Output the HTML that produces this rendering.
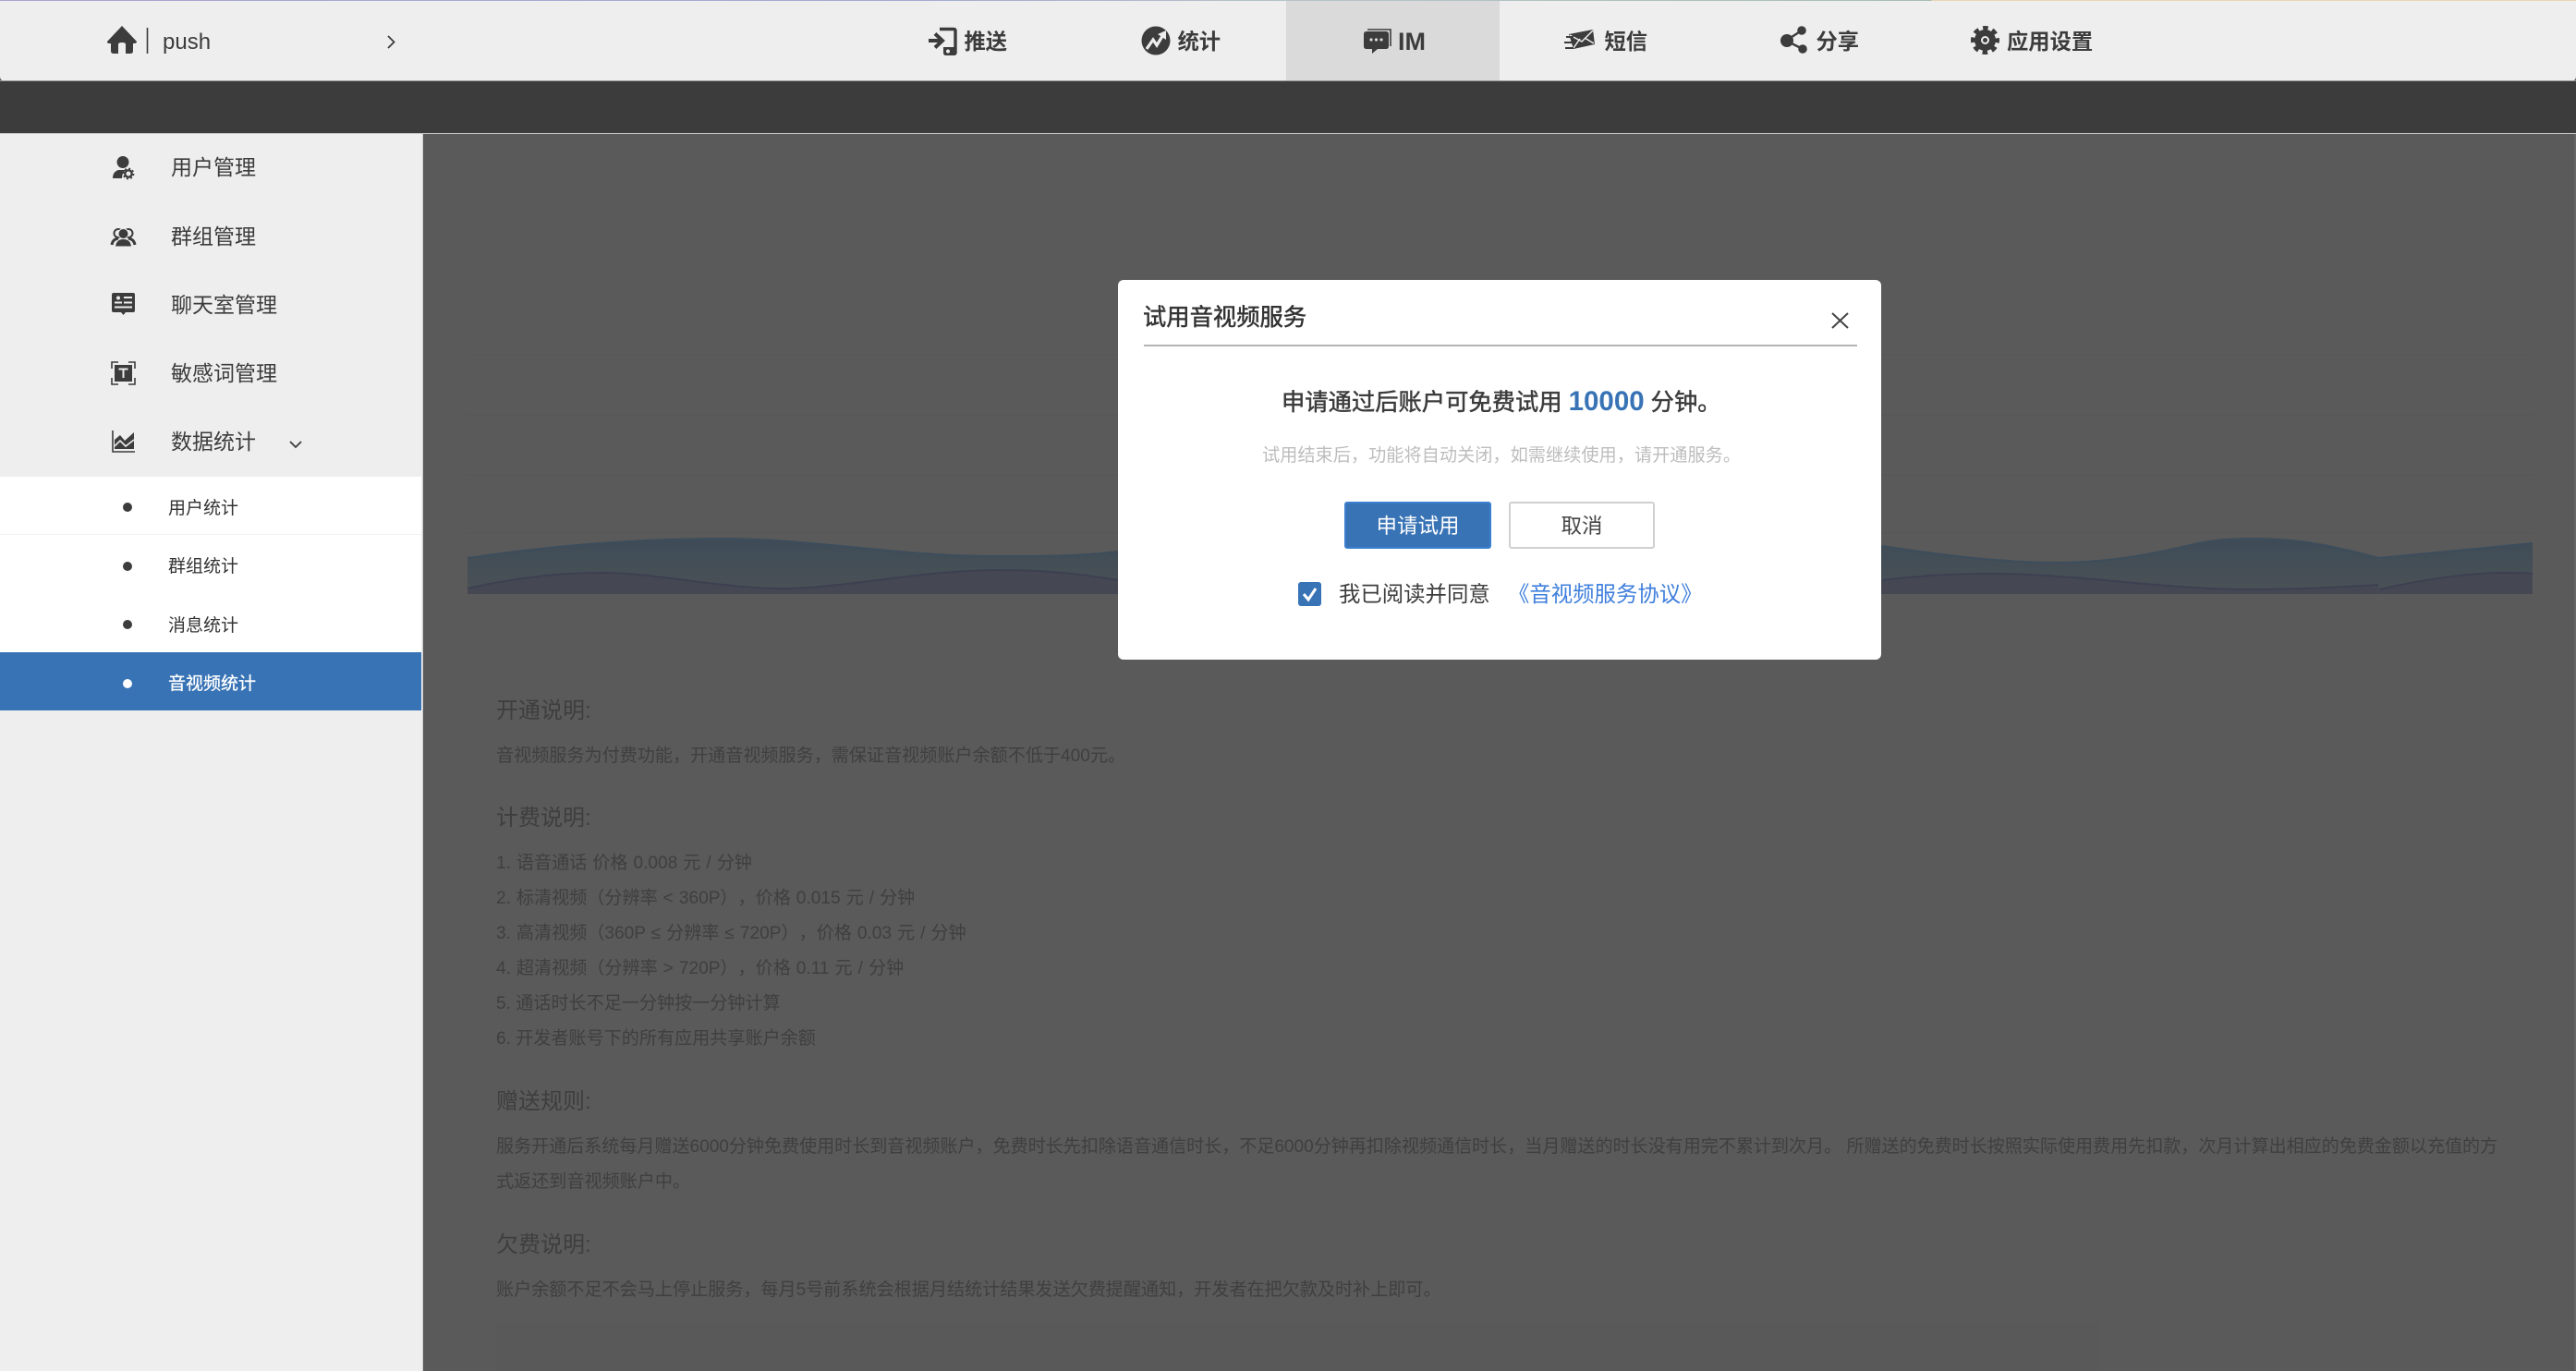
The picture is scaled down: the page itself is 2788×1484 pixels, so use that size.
<!DOCTYPE html>
<html lang="zh-CN"><head><meta charset="utf-8"><title>音视频统计</title>
<style>
html,body{margin:0;padding:0;background:#5a5a5a}
#p{position:relative;width:2788px;height:1484px;overflow:hidden;background:#5a5a5a;font-family:"Liberation Sans","Noto Sans CJK SC",sans-serif;color:#3c3c3c;text-spacing-trim:space-all}
.b{position:absolute}
.t{position:absolute;white-space:nowrap;height:40px;line-height:40px;margin-top:-20px}
.n{font-size:23.300px;font-weight:700;color:#3c3c3c}
.s{font-size:23px;left:185px;color:#3c3c3c}
.u{font-size:19px;left:182px;color:#333}
.h{font-size:24px;left:537px;color:#3e3e3e}
.c{font-size:19.100px;left:537px;color:#3f3f3f}
.l{word-spacing:.7px}
.m{-webkit-text-stroke:.5px currentColor}
svg{position:absolute;left:0;top:0}
</style></head><body><div id="p">
<div class="b" style="left:0;top:0;width:2788px;height:88px;background:#eee;border-radius:0 0 5px 5px"></div>
<div class="b" style="left:0;top:0;width:2788px;height:1px;background:linear-gradient(90deg,#a9a5cd 0,#a3acd0 1000px,#b5c4c8 1400px,#a9bdb5 2090px,#e8d3b5 2091px,#e8d3b5 100%)"></div>
<div class="b" style="left:1392px;top:1px;width:231px;height:86px;background:#dadada"></div>
<div class="b" style="left:0;top:87px;width:2788px;height:1px;background:#9a9a9a"></div>
<div class="b" style="left:0;top:88px;width:2788px;height:56px;background:#3c3c3c"></div>
<div class="b" style="left:0;top:144px;width:2788px;height:1px;background:#c4c4c4"></div>
<div class="b" style="left:0;top:145px;width:457px;height:1339px;background:#eee;border-right:1px solid #cfcfcf"></div>
<div class="b" style="left:0;top:516px;width:456px;height:190px;background:#fff"></div>
<div class="b" style="left:0;top:578px;width:456px;height:1px;background:#f1f1f1"></div>
<div class="b" style="left:0;top:706px;width:456px;height:63px;background:#3873b5"></div>
<div class="b" style="left:2786px;top:145px;width:2px;height:1339px;background:#666"></div>
<div class="b" style="left:537px;top:1431px;width:1735px;height:53px;background:#595959"></div>

<svg width="2788" height="1484" viewBox="0 0 2788 1484">
<defs><linearGradient id="g" x1="0" y1="583" x2="0" y2="643" gradientUnits="userSpaceOnUse"><stop offset="0" stop-color="#3e4c57"/><stop offset="1" stop-color="#4b5156"/></linearGradient></defs>
<g stroke="#565656" stroke-width="1"><path d="M506 384H2741M506 449H2741M506 514H2741M506 577H2741"/></g>
<path d="M506 604C600 590 690 583 780 583C880 583 970 602 1076 602C1130 602 1170 602 1210 597L2037 591C2110 602 2170 609 2226 609C2290 609 2340 597 2370 590C2400 583 2420 583 2442 583C2490 583 2530 592 2574 604V643H506Z" fill="url(#g)"/>
<path d="M2574 604L2741 588V643H2574Z" fill="url(#g)"/>
<path d="M506 604C600 590 690 583 780 583C880 583 970 602 1076 602C1130 602 1170 602 1210 597M2037 591C2110 602 2170 609 2226 609C2290 609 2340 597 2370 590C2400 583 2420 583 2442 583C2490 583 2530 592 2574 604L2741 588" fill="none" stroke="#3d4d5b" stroke-width="2"/>
<path d="M506 637C560 625 610 620 650 620C710 620 780 637 848 637C910 637 1000 617 1081 617C1130 617 1170 621 1210 628L2037 628C2070 624 2110 621 2151 621C2250 621 2340 638 2432 638C2490 638 2530 636 2574 633V643H506Z" fill="#454853"/>
<path d="M2575 638C2620 628 2670 620 2713 620C2725 620 2735 620 2741 621V643H2575Z" fill="#454853"/>
<path d="M506 637C560 625 610 620 650 620C710 620 780 637 848 637C910 637 1000 617 1081 617C1130 617 1170 621 1210 628M2037 628C2070 624 2110 621 2151 621C2250 621 2340 638 2432 638C2490 638 2530 636 2574 633M2575 638C2620 628 2670 620 2713 620C2725 620 2735 620 2741 621" fill="none" stroke="#3c4051" stroke-width="2"/>

<!-- home -->
<path d="M132 28L148 45Q148 47 145 47H144V55Q144 58 141 58H136V48Q136 46 132 46Q128 46 128 48V58H123Q120 58 120 55V47H118Q116 47 116 45Z" fill="#3c3c3c"/>
<path d="M159.500 30V58" stroke="#3c3c3c" stroke-width="1.600"/>
<path d="M420 39L426.500 45.500L420 52" fill="none" stroke="#3c3c3c" stroke-width="1.800"/>
<!-- push -->
<path d="M1017 31.500H1032Q1034 31.500 1034 33.500V58" fill="none" stroke="#3c3c3c" stroke-width="3.400"/>
<path d="M1021 51H1035.500V57Q1035.500 60 1032.500 60H1024Q1021 60 1021 57Z" fill="#3c3c3c"/><circle cx="1026" cy="55.500" r="2" fill="#eee"/>
<path d="M1005 44H1019M1012 36.500L1020 44L1012 51.500" fill="none" stroke="#3c3c3c" stroke-width="4"/>
<!-- stats -->
<circle cx="1251" cy="44" r="15.500" fill="#3c3c3c"/>
<path d="M1241 53L1248 43L1252 49L1259 37.500" fill="none" stroke="#eee" stroke-width="3.200"/><path d="M1253 37L1262 33L1262 43Z" fill="#eee"/>
<!-- IM -->
<path d="M1480 32H1505V50" fill="none" stroke="#3c3c3c" stroke-width="1.600"/>
<path d="M1479 34H1500Q1503 34 1503 37V50Q1503 53 1500 53H1491L1485 58V53H1479Q1476 53 1476 50V37Q1476 34 1479 34Z" fill="#3c3c3c"/>
<g fill="#dadada"><circle cx="1484" cy="43" r="1.600"/><circle cx="1489.500" cy="43" r="1.600"/><circle cx="1495" cy="43" r="1.600"/></g>
<!-- sms -->
<path d="M1698 37L1724 32L1726 48L1703 53Z" fill="#3c3c3c"/>
<path d="M1699 38L1712 45L1724 33M1703 52L1710 42M1725 47L1715 41" fill="none" stroke="#eee" stroke-width="1.500"/>
<path d="M1695 40H1703M1693 46H1702M1694 52H1703" stroke="#3c3c3c" stroke-width="2"/>
<!-- share -->
<path d="M1950 33L1933 44L1951 53" fill="none" stroke="#3c3c3c" stroke-width="2.400"/>
<circle cx="1950" cy="33" r="4.800" fill="#3c3c3c"/><circle cx="1934" cy="44" r="7" fill="#3c3c3c"/><circle cx="1951" cy="53" r="4.800" fill="#3c3c3c"/>
<!-- gear -->
<circle cx="2148.500" cy="43.500" r="8" fill="none" stroke="#3c3c3c" stroke-width="7"/>
<circle cx="2148.500" cy="43.500" r="13" fill="none" stroke="#3c3c3c" stroke-width="5" stroke-dasharray="5.500 4.710" stroke-dashoffset="2.750"/>
<circle cx="2148.500" cy="43.500" r="2.500" fill="#3c3c3c"/>

<!-- sidebar icons -->
<circle cx="133" cy="175.500" r="6.500" fill="#3c3c3c"/>
<path d="M122 193Q122 186 128 184L136 184Q132 187 132 193Z" fill="#3c3c3c"/>
<circle cx="139" cy="188" r="3.700" fill="none" stroke="#3c3c3c" stroke-width="2.400"/>
<circle cx="139" cy="188" r="5.600" fill="none" stroke="#3c3c3c" stroke-width="1.600" stroke-dasharray="2 2.400"/>

<circle cx="128" cy="252.500" r="4.500" fill="none" stroke="#3c3c3c" stroke-width="2"/><circle cx="139" cy="252.500" r="4.500" fill="none" stroke="#3c3c3c" stroke-width="2"/>
<path d="M121 265Q122 259 128 258M146 265Q145 259 139 258" fill="none" stroke="#3c3c3c" stroke-width="3"/>
<circle cx="133.500" cy="253" r="5.500" fill="#3c3c3c" stroke="#eee" stroke-width="1"/>
<path d="M125 266.500Q126 259 133.500 259Q141 259 142 266.500Z" fill="#3c3c3c"/>

<path d="M123 317H144Q146 317 146 319V336Q146 338 144 338H136L133.500 341L131 338H123Q121 338 121 336V319Q121 317 123 317Z" fill="#3c3c3c"/>
<circle cx="128" cy="322.500" r="2" fill="#eee"/><path d="M124 327.500H132M134 322H143M134 327.500H143M124 332.500H143" stroke="#eee" stroke-width="2"/>

<path d="M121 399V392H128M139 392H146V399M121 409V416H128M139 416H146V409" fill="none" stroke="#3c3c3c" stroke-width="1.600"/>
<rect x="124" y="395" width="19" height="18" fill="#3c3c3c"/><path d="M128.500 399.500H138.500M133.500 399.500V409" stroke="#eee" stroke-width="2"/>

<path d="M122 466V489H146" fill="none" stroke="#3c3c3c" stroke-width="1.600"/>
<path d="M124 476L130 471L135 477L145 468V486H124Z" fill="#3c3c3c"/>
<path d="M124 483L130 477L136 483L145 476" fill="none" stroke="#eee" stroke-width="1.600"/>
<path d="M314 478L320 484L326 478" fill="none" stroke="#3c3c3c" stroke-width="1.800"/>
<circle cx="138" cy="549" r="5" fill="#3c3c3c"/><circle cx="138" cy="613" r="5" fill="#3c3c3c"/><circle cx="138" cy="676" r="5" fill="#3c3c3c"/><circle cx="138" cy="740" r="5" fill="#fff"/>
</svg>

<div class="t" style="left:176px;top:46px;font-size:24px;color:#3c3c3c">push</div>
<div class="t n" style="left:1043.500px;top:45px">推送</div>
<div class="t n" style="left:1274.500px;top:45px">统计</div>
<div class="t n" style="left:1513px;top:45px;font-size:27px">IM</div>
<div class="t n" style="left:1736.500px;top:45px">短信</div>
<div class="t n" style="left:1965.500px;top:45px">分享</div>
<div class="t n" style="left:2172px;top:45px">应用设置</div>

<div class="t s" style="top:181px">用户管理</div>
<div class="t s" style="top:256px">群组管理</div>
<div class="t s" style="top:330px">聊天室管理</div>
<div class="t s" style="top:404px">敏感词管理</div>
<div class="t s" style="top:478px">数据统计</div>
<div class="t u" style="top:551px">用户统计</div>
<div class="t u" style="top:614px">群组统计</div>
<div class="t u" style="top:678px">消息统计</div>
<div class="t u" style="top:741px;color:#fff;-webkit-text-stroke:.3px #fff">音视频统计</div>

<div class="t h" style="top:770px">开通说明:</div>
<div class="t c" style="top:819px">音视频服务为付费功能，开通音视频服务，需保证音视频账户余额不低于400元。</div>
<div class="t h" style="top:886px">计费说明:</div>
<div class="t c l" style="top:935px">1. 语音通话 价格 0.008 元 / 分钟</div>
<div class="t c l" style="top:973px">2. 标清视频（分辨率 &lt; 360P），价格 0.015 元 / 分钟</div>
<div class="t c l" style="top:1011px">3. 高清视频（360P ≤ 分辨率 ≤ 720P），价格 0.03 元 / 分钟</div>
<div class="t c l" style="top:1049px">4. 超清视频（分辨率 &gt; 720P），价格 0.11 元 / 分钟</div>
<div class="t c" style="top:1087px">5. 通话时长不足一分钟按一分钟计算</div>
<div class="t c" style="top:1125px">6. 开发者账号下的所有应用共享账户余额</div>
<div class="t h" style="top:1193px">赠送规则:</div>
<div class="t c" style="top:1242px;font-size:19.060px">服务开通后系统每月赠送6000分钟免费使用时长到音视频账户，免费时长先扣除语音通信时长，不足6000分钟再扣除视频通信时长，当月赠送的时长没有用完不累计到次月。 所赠送的免费时长按照实际使用费用先扣款，次月计算出相应的免费金额以充值的方</div>
<div class="t c" style="top:1280px">式返还到音视频账户中。</div>
<div class="t h" style="top:1348px">欠费说明:</div>
<div class="t c" style="top:1397px">账户余额不足不会马上停止服务，每月5号前系统会根据月结统计结果发送欠费提醒通知，开发者在把欠款及时补上即可。</div>

<div class="b" style="left:1210px;top:303px;width:826px;height:411px;background:#fff;border-radius:6px"></div>
<div class="t m" style="left:1237px;top:344px;font-size:25.300px;color:#333">试用音视频服务</div>
<div class="b" style="left:1238px;top:373px;width:772px;height:2px;background:#b4b4b4"></div>
<svg width="2788" height="1484" viewBox="0 0 2788 1484">
<path d="M1983 339L2000 355M2000 339L1983 355" stroke="#444" stroke-width="2"/>
<rect x="1405" y="630" width="25" height="26" rx="3" fill="#3873b5"/>
<path d="M1411 643L1416 649L1424 637" fill="none" stroke="#fff" stroke-width="3"/>
</svg>
<div class="t m" style="left:1387px;top:435px;font-size:25.300px;color:#3c3c3c">申请通过后账户可免费试用 <span style="font-size:29.500px;font-weight:700;color:#3873b5;-webkit-text-stroke:0">10000</span> 分钟。</div>
<div class="t" style="left:1366px;top:493.500px;font-size:19.200px;color:#bdbdbd">试用结束后，功能将自动关闭，如需继续使用，请开通服务。</div>
<div class="b" style="left:1455px;top:543px;width:155px;height:47px;line-height:49px;border:2px solid #3b7fcf;border-radius:3px;background:#3873b5;color:#fff;font-size:22.500px;text-align:center">申请试用</div>
<div class="b" style="left:1633px;top:543px;width:154px;height:47px;line-height:49px;border:2px solid #d0d0d0;border-radius:3px;background:#fff;color:#444;font-size:22.500px;text-align:center">取消</div>
<div class="t" style="left:1449px;top:643px;font-size:23.400px;color:#3c3c3c">我已阅读并同意</div>
<div class="t" style="left:1632px;top:643px;font-size:23.400px;color:#3f7fdc">《音视频服务协议》</div>
</div></body></html>
